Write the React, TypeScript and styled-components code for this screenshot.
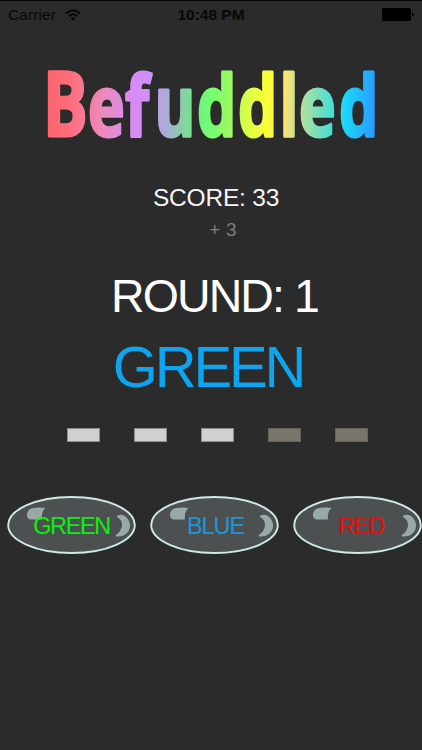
import React from "react";
import styled, { createGlobalStyle } from "styled-components";

const GlobalStyle = createGlobalStyle`
  body { margin: 0; background: #2b2b2b; }
`;

const Screen = styled.main`
  box-sizing: border-box;
  width: 422px;
  height: 750px;
  overflow: hidden;
  display: flex;
  flex-direction: column;
  border-top: 1px solid #050505;
  background: #2b2b2b;
  font-family: "Liberation Sans", Arial, sans-serif;
`;

const StatusBar = styled.header`
  display: grid;
  grid-template-columns: 1fr auto 1fr;
  align-items: center;
  height: 27px;
  padding: 0 8px;
  color: #080808;
  font-size: 15.5px;
  line-height: 27px;
`;

const Carrier = styled.div`
  display: flex;
  align-items: center;
  gap: 9px;
  letter-spacing: 0.1px;
`;

const Clock = styled.time`
  font-weight: bold;
`;

const BatterySlot = styled.div`
  display: flex;
  justify-content: flex-end;
`;

const Logo = styled.svg`
  display: block;
  flex: none;
  width: 422px;
  height: 127px;
  overflow: visible;
`;

const Line = styled.div<{
  $size: number;
  $height: number;
  $color: string;
  $spacing: number;
  $shift?: number;
  $gap?: number;
}>`
  flex: none;
  box-sizing: border-box;
  height: ${(p) => p.$height}px;
  margin-top: ${(p) => p.$gap ?? 0}px;
  padding-left: ${(p) => p.$shift ?? 0}px;
  line-height: ${(p) => p.$height}px;
  font-size: ${(p) => p.$size}px;
  letter-spacing: ${(p) => p.$spacing}px;
  color: ${(p) => p.$color};
  text-align: center;
  white-space: nowrap;
`;

const Target = styled(Line)`
  padding-right: 6px;
`;

const Progress = styled.div`
  display: flex;
  gap: 34px;
  margin: 25px 0 0 67px;
`;

const Step = styled.div<{ $done: boolean }>`
  box-sizing: border-box;
  width: 33px;
  height: 14px;
  border: 1px solid ${(p) => (p.$done ? "#8d8d8d" : "#67635a")};
  background: ${(p) => (p.$done ? "#d0d0d0" : "#7a756a")};
`;

const Choices = styled.div`
  display: flex;
  gap: 14px;
  margin: 52px 0 0 7px;
`;

const Choice = styled.button<{ $color: string }>`
  flex: none;
  display: grid;
  place-items: center;
  width: 129px;
  height: 60px;
  padding: 0;
  border: 0;
  background: none;
  font-family: inherit;
  font-size: 23.5px;
  line-height: 60px;
  color: ${(p) => p.$color};

  & > * { grid-area: 1 / 1; }
`;

const ChoiceLabel = styled.span<{ $spacing: number; $shift: number }>`
  padding-left: ${(p) => p.$shift}px;
  padding-top: 2px;
  letter-spacing: ${(p) => p.$spacing}px;
`;

const Bubble = () => (
  <svg width="129" height="60" viewBox="0 0 129 60" aria-hidden="true">
    <ellipse cx="64.5" cy="30" rx="63.3" ry="28" fill="#4c5050" stroke="#cdeae6" strokeWidth="1.9" />
    <path d="M24 13.500 Q31 12 38.500 13 Q34 17 35 24.500 L23 24.500 Q19.500 23 20 19 Q20.500 15 24 13.500Z" fill="#98a9a8" />
    <path d="M112 20 Q118 19 121.500 25 Q125 31 121 37 Q117 42 109 41.500 Q108 40 110 39 Q114 36 115 31 Q115.500 25 110 22 Q109.500 20 112 20Z" fill="#98a9a8" />
  </svg>
);

const choices = [
  { label: "GREEN", color: "#08f20c", spacing: -1.4, shift: 0 },
  { label: "BLUE", color: "#1b96da", spacing: -1.1, shift: 2 },
  { label: "RED", color: "#e90d0d", spacing: -1.4, shift: 7 },
];

const STRETCH = 0.74;

const letters = [
  { char: "B", left: 43, size: 90 },
  { char: "e", left: 88, size: 84 },
  { char: "f", left: 125, size: 84 },
  { char: "u", left: 154.5, size: 84 },
  { char: "d", left: 197, size: 84 },
  { char: "d", left: 238, size: 84 },
  { char: "l", left: 279.5, size: 84 },
  { char: "e", left: 299, size: 84 },
  { char: "d", left: 339, size: 84 },
];

const rainbow: [number, string][] = [
  [0, "#ff6470"],
  [0.07, "#ff6d78"],
  [0.18, "#ec8bc0"],
  [0.26, "#d88bf4"],
  [0.31, "#cf90f8"],
  [0.38, "#a0b5cc"],
  [0.44, "#78e090"],
  [0.5, "#70ff70"],
  [0.56, "#9cf860"],
  [0.61, "#d9ff48"],
  [0.67, "#fbff38"],
  [0.73, "#f4e378"],
  [0.78, "#b0dfa0"],
  [0.86, "#50dfd0"],
  [0.91, "#1ed3fa"],
  [1, "#269cff"],
];

export default function App() {
  return (
    <Screen>
      <GlobalStyle />
      <StatusBar>
        <Carrier>
          Carrier
          <svg width="16" height="12" viewBox="0 0 16 12" fill="none" stroke="#080808" strokeWidth="2">
            <path d="M1 4.400 Q8 -2 15 4.400M3.800 7.200 Q8 3.300 12.200 7.200" />
            <path d="M8 11.700 L5.600 9.300 Q8 7.200 10.400 9.300Z" fill="#080808" stroke="none" />
          </svg>
        </Carrier>
        <Clock>10:48 PM</Clock>
        <BatterySlot>
          <svg width="32" height="13" viewBox="0 0 32 13" fill="#000">
            <rect width="29" height="13" rx="1.500" />
            <path d="M30 4.500 Q32 5 32 6.500 Q32 8 30 8.500Z" />
          </svg>
        </BatterySlot>
      </StatusBar>
      <Logo viewBox="0 28 422 127">
        <defs>
          <linearGradient
            id="rainbow"
            gradientUnits="userSpaceOnUse"
            x1={47 / STRETCH}
            y1="70"
            x2={376 / STRETCH}
            y2="90"
          >
            {rainbow.map(([offset, color]) => (
              <stop key={offset} offset={offset} stopColor={color} />
            ))}
          </linearGradient>
        </defs>
        <text
          transform={`scale(${STRETCH} 1)`}
          y="136.500"
          fontFamily="Open Sans, sans-serif"
          fontWeight="700"
          fill="url(#rainbow)"
          stroke="url(#rainbow)"
          strokeWidth="3"
          strokeLinejoin="round"
        >
          {letters.map((l, i) => (
            <tspan key={i} x={l.left / STRETCH} fontSize={l.size}>{l.char}</tspan>
          ))}
        </text>
      </Logo>
      <Line $size={24.5} $height={32} $color="#f5f5f5" $spacing={-0.2} $shift={10} $gap={27}>SCORE: 33</Line>
      <Line $size={19} $height={30} $color="#7b7d7d" $spacing={0.2} $shift={24} $gap={1}>+ 3</Line>
      <Line $size={46.5} $height={60} $color="#ffffff" $spacing={-1.9} $shift={7} $gap={21}>ROUND: 1</Line>
      <Target $size={58} $height={72} $color="#0da5f2" $spacing={-3.2} $gap={5}>GREEN</Target>
      <Progress>
        {[true, true, true, false, false].map((done, i) => (
          <Step key={i} $done={done} />
        ))}
      </Progress>
      <Choices>
        {choices.map((c) => (
          <Choice key={c.label} $color={c.color}>
            <Bubble />
            <ChoiceLabel $spacing={c.spacing} $shift={c.shift}>{c.label}</ChoiceLabel>
          </Choice>
        ))}
      </Choices>
    </Screen>
  );
}
